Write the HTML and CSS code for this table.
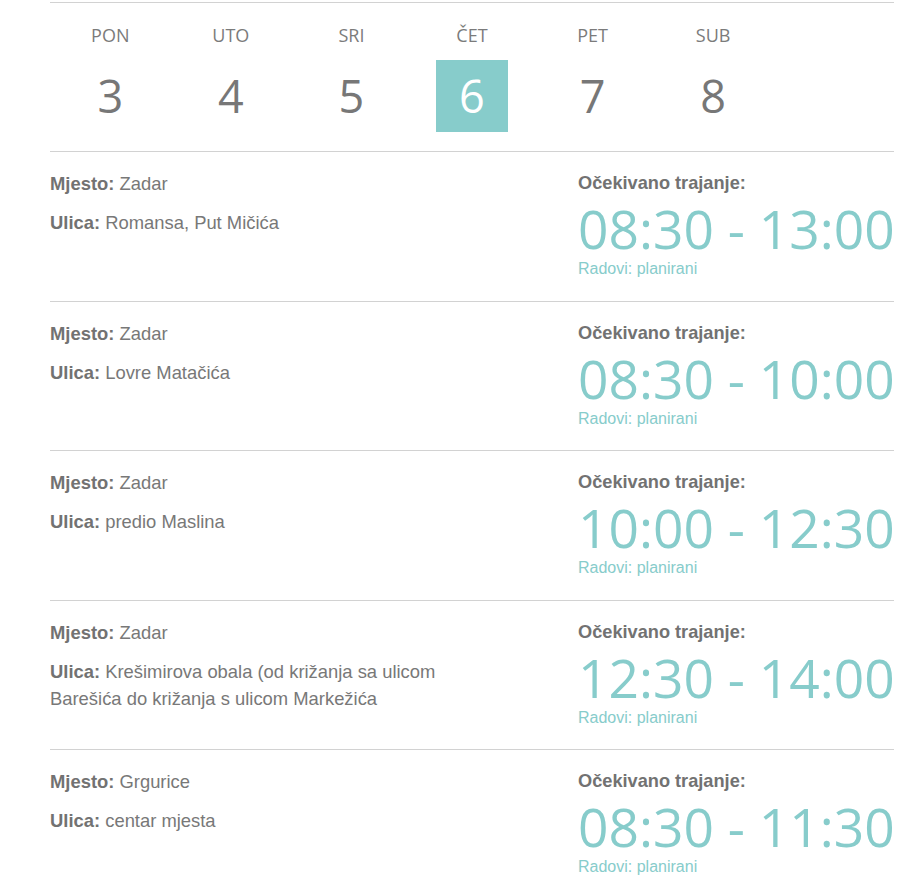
FILE: index.html
```html
<!DOCTYPE html>
<html lang="hr">
<head>
<meta charset="utf-8">
<title>Radovi</title>
<link rel="stylesheet" href="styles.css">
</head>
<body>
<div class="wrap">
  <div class="days">
    <div class="day"><div class="day-name">PON</div><div class="day-num">3</div></div>
    <div class="day"><div class="day-name">UTO</div><div class="day-num">4</div></div>
    <div class="day"><div class="day-name">SRI</div><div class="day-num">5</div></div>
    <div class="day"><div class="day-name">ČET</div><div class="day-num active">6</div></div>
    <div class="day"><div class="day-name">PET</div><div class="day-num">7</div></div>
    <div class="day"><div class="day-name">SUB</div><div class="day-num">8</div></div>
  </div>

  <div class="row">
    <div class="place">
      <p class="line"><b>Mjesto:</b> Zadar</p>
      <p class="line"><b>Ulica:</b> Romansa, Put Mičića</p>
    </div>
    <div class="time">
      <p class="label">Očekivano trajanje:</p>
      <p class="hours">08:30 - 13:00</p>
      <p class="status">Radovi: planirani</p>
    </div>
  </div>

  <div class="row">
    <div class="place">
      <p class="line"><b>Mjesto:</b> Zadar</p>
      <p class="line"><b>Ulica:</b> Lovre Matačića</p>
    </div>
    <div class="time">
      <p class="label">Očekivano trajanje:</p>
      <p class="hours">08:30 - 10:00</p>
      <p class="status">Radovi: planirani</p>
    </div>
  </div>

  <div class="row">
    <div class="place">
      <p class="line"><b>Mjesto:</b> Zadar</p>
      <p class="line"><b>Ulica:</b> predio Maslina</p>
    </div>
    <div class="time">
      <p class="label">Očekivano trajanje:</p>
      <p class="hours">10:00 - 12:30</p>
      <p class="status">Radovi: planirani</p>
    </div>
  </div>

  <div class="row">
    <div class="place">
      <p class="line"><b>Mjesto:</b> Zadar</p>
      <p class="line"><b>Ulica:</b> Krešimirova obala (od križanja sa ulicom Barešića do križanja s ulicom Markežića</p>
    </div>
    <div class="time">
      <p class="label">Očekivano trajanje:</p>
      <p class="hours">12:30 - 14:00</p>
      <p class="status">Radovi: planirani</p>
    </div>
  </div>

  <div class="row">
    <div class="place">
      <p class="line"><b>Mjesto:</b> Grgurice</p>
      <p class="line"><b>Ulica:</b> centar mjesta</p>
    </div>
    <div class="time">
      <p class="label">Očekivano trajanje:</p>
      <p class="hours">08:30 - 11:30</p>
      <p class="status">Radovi: planirani</p>
    </div>
  </div>
</div>
</body>
</html>
```

FILE: styles.css
```css
html, body {
  margin: 0;
  padding: 0;
  background: #fff;
}

body {
  font-family: "Liberation Sans", Arial, sans-serif;
  color: #777;
  overflow: hidden;
}

p {
  margin: 0;
}

.wrap {
  width: 844px;
  margin: 2px 0 0 50px;
  border-top: 1px solid #d2d2d2;
}

.days {
  display: grid;
  grid-template-columns: repeat(7, 1fr);
  padding: 20px 0 19px;
  border-bottom: 1px solid #d2d2d2;
}

.day {
  display: flex;
  flex-direction: column;
  align-items: center;
  font-family: "Open Sans", sans-serif;
}

.day-name {
  font-size: 18px;
  line-height: 24px;
  color: #7b7b7b;
  margin-bottom: 13px;
}

.day-num {
  width: 72px;
  height: 72px;
  font-size: 45px;
  line-height: 71px;
  text-align: center;
  color: #777;
}

.day-num.active {
  background: #87cccb;
  color: #fff;
}

.row {
  display: grid;
  grid-template-columns: 528px 1fr;
  padding: 18px 0 20.5px;
  border-bottom: 1px solid #d2d2d2;
}

.place {
  width: 445px;
}

.line {
  font-size: 18.4px;
  line-height: 27px;
  color: #787878;
  margin-bottom: 12px;
}

.line b {
  color: #727272;
}

.label {
  font-size: 18.2px;
  line-height: 27px;
  font-weight: bold;
  color: #727272;
}

.hours {
  font-family: "Open Sans", sans-serif;
  font-size: 53.3px;
  line-height: 56px;
  margin-top: 4px;
  color: #87cccb;
  white-space: nowrap;
}

.status {
  font-size: 16px;
  line-height: 23px;
  color: #87cccb;
}
```
